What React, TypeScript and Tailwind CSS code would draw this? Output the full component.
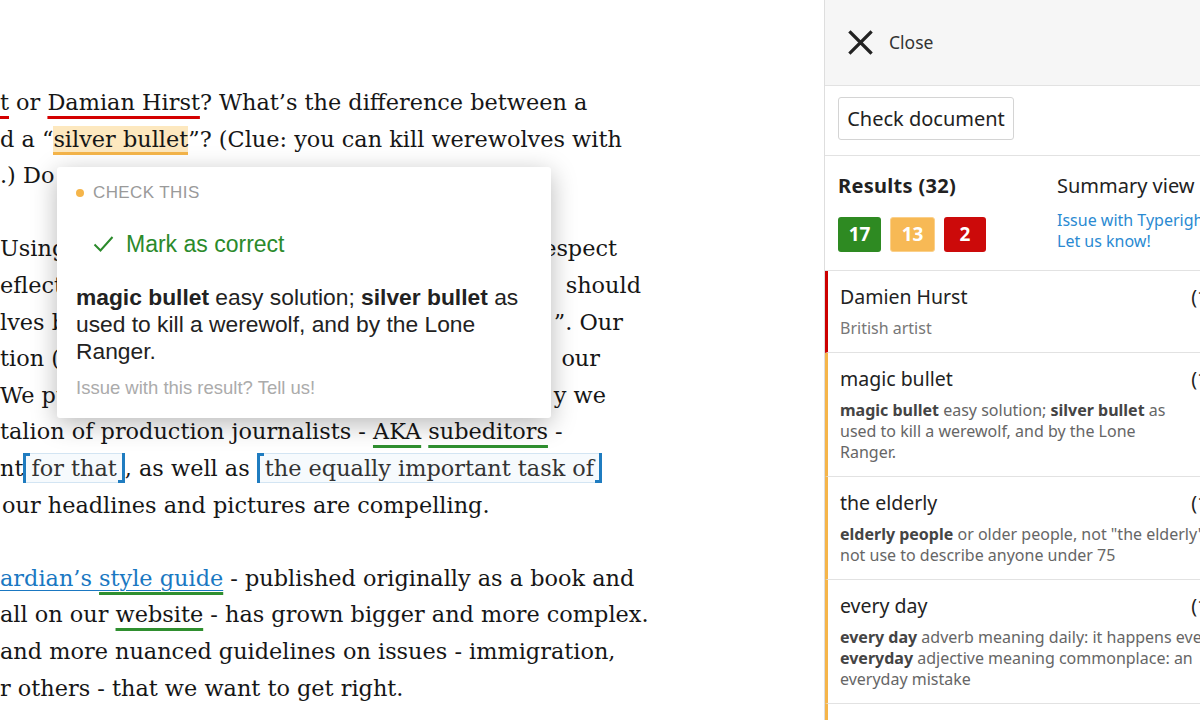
import React from "react";

type Node = React.ReactNode;

const serif = "font-['DejaVu_Serif',serif]";
const sans = "font-['Noto_Sans',sans-serif]";

function Red({ children }: { children: Node }) {
	return <span className="underline decoration-[#d40000] decoration-[3px] underline-offset-[6px]">{children}</span>;
}

function Green({ children }: { children: Node }) {
	return <span className="underline decoration-[#2f8f2f] decoration-[3px] underline-offset-[6px]">{children}</span>;
}

function Amber({ children }: { children: Node }) {
	return <span className="bg-[#fde8bf] border-b-[3px] border-[#f5b54a]">{children}</span>;
}

// blue "range" boxes with bracket ends
function Range({ children }: { children: Node }) {
	return (
		<span className="relative inline-block leading-[28px] px-[7px] border border-[#d3e5f3] bg-[#f6fafd] text-[#333]">
			<span className="absolute left-[-1px] top-[-1px] bottom-[-1px] w-[3px] bg-[#1f7cc0]" />
			<span className="absolute left-[-1px] top-[-1px] w-[7px] h-[3px] bg-[#1f7cc0]" />
			<span className="absolute right-[-1px] top-[-1px] bottom-[-1px] w-[3px] bg-[#1f7cc0]" />
			<span className="absolute right-[-1px] bottom-[-1px] w-[7px] h-[3px] bg-[#1f7cc0]" />
			{children}
		</span>
	);
}

function Line({ children }: { children?: Node }) {
	return <div className="h-[36.6px] leading-[36.6px] whitespace-nowrap">{children}</div>;
}

// lines partly hidden under the popover: only the two ends show
function Split({ left, right, w }: { left: string; right?: string; w: string }) {
	return (
		<div className={`h-[36.6px] leading-[36.6px] whitespace-nowrap flex justify-between ${w}`}>
			<span>{left}</span>
			<span>{right}</span>
		</div>
	);
}

function Popover() {
	return (
		<div className="absolute left-[57px] top-[167px] w-[494px] h-[251px] bg-white rounded-[3px] shadow-[0_6px_26px_rgba(0,0,0,0.28)] font-['Liberation_Sans',sans-serif] px-[19px] pt-[16px]">
			<div className="flex items-center gap-[9px] h-[20px]">
				<span className="w-[8px] h-[8px] rounded-full bg-[#f5b54a]" />
				<span className="text-[17px] tracking-[0.4px] text-[#9a9a9a]">CHECK THIS</span>
			</div>
			<div className="flex items-center gap-[12px] h-[24px] mt-[29px] ml-[17px] text-[#2b8a2b]">
				<svg width="21" height="18" viewBox="0 0 21 18" fill="none" stroke="currentColor" strokeWidth="2">
					<path d="M1.5 9.5 L7.5 15.5 L19.5 2" />
				</svg>
				<span className="text-[23px]">Mark as correct</span>
			</div>
			<div className="mt-[28px] text-[22.8px] leading-[27px] text-[#222] whitespace-nowrap">
				<b>magic bullet</b> easy solution; <b>silver bullet</b> as<br />
				used to kill a werewolf, and by the Lone<br />
				Ranger.
			</div>
			<div className="mt-[13px] text-[18.5px] leading-[20px] text-[#ababab]">Issue with this result? Tell us!</div>
		</div>
	);
}

type Result = { id: string; title: string; bar: string; body: Node };

const results: Result[] = [
	{ id: "hurst", title: "Damien Hurst", bar: "border-[#cc0000]", body: <span className="text-[#777]">British artist</span> },
	{
		id: "magic",
		title: "magic bullet",
		bar: "border-[#f5b54a]",
		body: (
			<>
				<b className="text-[#444]">magic bullet</b> easy solution; <b className="text-[#444]">silver bullet</b> as<br />
				used to kill a werewolf, and by the Lone<br />
				Ranger.
			</>
		),
	},
	{
		id: "elderly",
		title: "the elderly",
		bar: "border-[#f5b54a]",
		body: (
			<>
				<b className="text-[#444]">elderly people</b> or older people, not "the elderly"; do<br />
				not use to describe anyone under 75
			</>
		),
	},
	{
		id: "everyday",
		title: "every day",
		bar: "border-[#f5b54a]",
		body: (
			<>
				<b className="text-[#444]">every day</b> adverb meaning daily: it happens every day<br />
				<b className="text-[#444]">everyday</b> adjective meaning commonplace: an<br />
				everyday mistake
			</>
		),
	},
	{ id: "next", title: "", bar: "border-[#f5b54a]", body: null },
];

function Sidebar() {
	return (
		<aside className={`w-[406px] shrink-0 h-full border-l border-[#dedede] bg-white ${sans} text-[#222]`}>
			<div className="h-[86px] bg-[#f6f6f6] border-b border-[#e2e2e2] flex items-center pl-[23px] gap-[16px]">
				<svg width="25" height="25" viewBox="0 0 25 25" stroke="#222" strokeWidth="3.2" strokeLinecap="square">
					<path d="M2.5 2.5 L22.5 22.5 M22.5 2.5 L2.5 22.5" />
				</svg>
				<span className="text-[17.5px] text-[#333]">Close</span>
			</div>
			<div className="h-[70px] border-b border-[#e2e2e2] px-[13px] pt-[11px]">
				<button className="h-[43px] w-[176px] border border-[#d4d4d4] rounded-[3px] bg-white text-[20px] text-[#222]">Check document</button>
			</div>
			<div className="h-[115px] border-b border-[#e2e2e2] px-[13px] pt-[16px] flex">
				<div className="w-[219px] shrink-0">
					<div className="text-[20px] font-bold leading-[28px] tracking-[0.3px]">Results (32)</div>
					<div className="flex gap-[9px] mt-[17px]">
						<span className="w-[43px] h-[35px] rounded-[3px] bg-[#2e8a22] text-white font-bold text-[19px] flex items-center justify-center">17</span>
						<span className="w-[45px] h-[35px] rounded-[3px] bg-[#f7b955] border border-[#fbd08a] text-white font-bold text-[19px] flex items-center justify-center">13</span>
						<span className="w-[42px] h-[35px] rounded-[3px] bg-[#cc0a0a] text-white font-bold text-[19px] flex items-center justify-center">2</span>
					</div>
				</div>
				<div className="whitespace-nowrap">
					<div className="text-[20px] leading-[28px]">Summary view</div>
					<div className="mt-[10px] text-[16px] leading-[21px] text-[#2a8ad2]">
						Issue with Typerighter?<br />Let us know!
					</div>
				</div>
			</div>
			{results.map(r => (
				<div key={r.id} className={`border-l-[3px] ${r.bar} border-b border-b-[#e2e2e2] pl-[12px] pr-[16px] pt-[13px] pb-[13px]`}>
					<div className="flex justify-between text-[19.5px] leading-[26px] text-[#222]">
						<span>{r.title}</span>
						<span>{r.title ? "(1)" : ""}</span>
					</div>
					{r.body && <div className="mt-[8px] text-[16px] leading-[21px] text-[#666] whitespace-nowrap">{r.body}</div>}
				</div>
			))}
		</aside>
	);
}

export default function App() {
	return (
		<div className="w-[1200px] h-[720px] overflow-hidden flex bg-white">
			<main className={`relative w-[824px] shrink-0 overflow-hidden pt-[84px] text-[22.4px] text-[#161616] ${serif}`}>
				<Line>
					<Red>t</Red> or <Red>Damian Hirst</Red>? What’s the difference between a
				</Line>
				<Line>
					d a “<Amber>silver bullet</Amber>”? (Clue: you can kill werewolves with
				</Line>
				<Split left=".) Do" w="w-[60px]" />
				<Line />
				<Split left="Using" right="espect" w="w-[617px]" />
				<Split left="eflect" right="should" w="w-[641px]" />
				<Split left="lves b" right="”. Our" w="w-[623px]" />
				<Split left="tion (" right="our" w="w-[600px]" />
				<Split left="We pu" right="y we" w="w-[606px]" />
				<Line>
					talion of production journalists - <Green>AKA</Green> <Green>subeditors</Green> -
				</Line>
				<Line>
					nt<Range>for that</Range>, as well as <Range>the equally important task of</Range>
				</Line>
				<div className="h-[36.6px] leading-[36.6px] whitespace-nowrap pl-[2px]">our headlines and pictures are compelling.</div>
				<Line />
				<Line>
					<span className="text-[#1a78c2] underline decoration-[#1a78c2] decoration-1 underline-offset-[4px]">
						ardian’s <span className="underline decoration-[#2f8f2f] decoration-[3px] underline-offset-[6px]">style guide</span>
					</span>{" "}
					- published originally as a book and
				</Line>
				<Line>
					all on our <Green>website</Green> - has grown bigger and more complex.
				</Line>
				<Line>and more nuanced guidelines on issues - immigration,</Line>
				<Line>r others - that we want to get right.</Line>
				<Popover />
			</main>
			<Sidebar />
		</div>
	);
}
